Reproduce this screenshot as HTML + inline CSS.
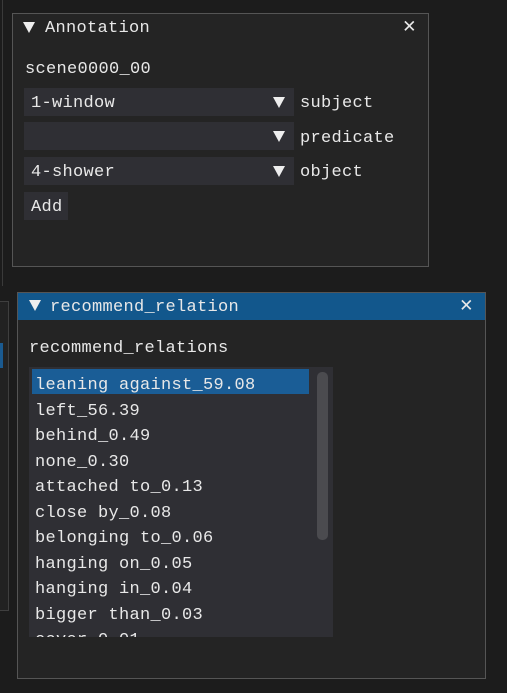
<!DOCTYPE html>
<html><head><style>
*{margin:0;padding:0;box-sizing:border-box}
body{width:507px;height:693px;background:#1c1c1c;position:relative;overflow:hidden;font-family:"Liberation Mono",monospace;font-size:17px;letter-spacing:0.3px;color:#e8e8e8}
.a{position:absolute}
.t{position:absolute;white-space:pre;line-height:20px}
.tri{position:absolute;width:0;height:0;border-left:6px solid transparent;border-right:6px solid transparent;border-top:11px solid #eee}
</style></head><body>
<div class="a" style="left:0;top:0;width:3px;height:286px;border-right:1px solid #3a3a3a"></div>
<div class="a" style="left:0;top:301px;width:9px;height:310px;border:1px solid #3f3f3f;border-left:none;background:#222"></div>
<div class="a" style="left:0;top:343px;width:3px;height:25px;background:#1a5a90"></div>

<div class="a" style="left:12px;top:13px;width:417px;height:254px;background:#242424;border:1px solid #555"></div>
<div class="tri" style="left:23px;top:22px"></div>
<div class="t" style="left:45px;top:19px">Annotation</div>
<div class="t" style="left:403px;top:18px;font-size:21px">✕</div>
<div class="t" style="left:25px;top:60px">scene0000_00</div>
<div class="a" style="left:24px;top:88px;width:270px;height:28px;background:#2f2f34"></div>
<div class="a" style="left:24px;top:122px;width:270px;height:28px;background:#2f2f34"></div>
<div class="a" style="left:24px;top:157px;width:270px;height:28px;background:#2f2f34"></div>
<div class="tri" style="left:273px;top:97px"></div>
<div class="tri" style="left:273px;top:131px"></div>
<div class="tri" style="left:273px;top:166px"></div>
<div class="t" style="left:31px;top:94px">1-window</div>
<div class="t" style="left:300px;top:94px">subject</div>
<div class="t" style="left:300px;top:129px">predicate</div>
<div class="t" style="left:31px;top:163px">4-shower</div>
<div class="t" style="left:300px;top:163px">object</div>
<div class="a" style="left:24px;top:192px;width:44px;height:28px;background:#2f2f34"></div>
<div class="t" style="left:31px;top:198px">Add</div>

<div class="a" style="left:17px;top:292px;width:469px;height:387px;background:#242424;border:1px solid #555"></div>
<div class="a" style="left:18px;top:293px;width:467px;height:27px;background:#12578c"></div>
<div class="tri" style="left:29px;top:300px"></div>
<div class="t" style="left:50px;top:298px">recommend_relation</div>
<div class="t" style="left:460px;top:297px;font-size:21px">✕</div>
<div class="t" style="left:29px;top:339px">recommend_relations</div>
<div class="a" style="left:29px;top:367px;width:304px;height:270px;background:#2f2f34;overflow:hidden">
<div class="a" style="left:3px;top:2px;width:277px;height:25px;background:#1a5d96"></div>
<div class="a" style="left:288px;top:5px;width:11px;height:168px;background:#4b4b4f;border-radius:5px"></div>
<div class="t" style="left:6px;top:6px;line-height:25.5px">leaning against_59.08
left_56.39
behind_0.49
none_0.30
attached to_0.13
close by_0.08
belonging to_0.06
hanging on_0.05
hanging in_0.04
bigger than_0.03
cover_0.01</div>
</div>
</body></html>
